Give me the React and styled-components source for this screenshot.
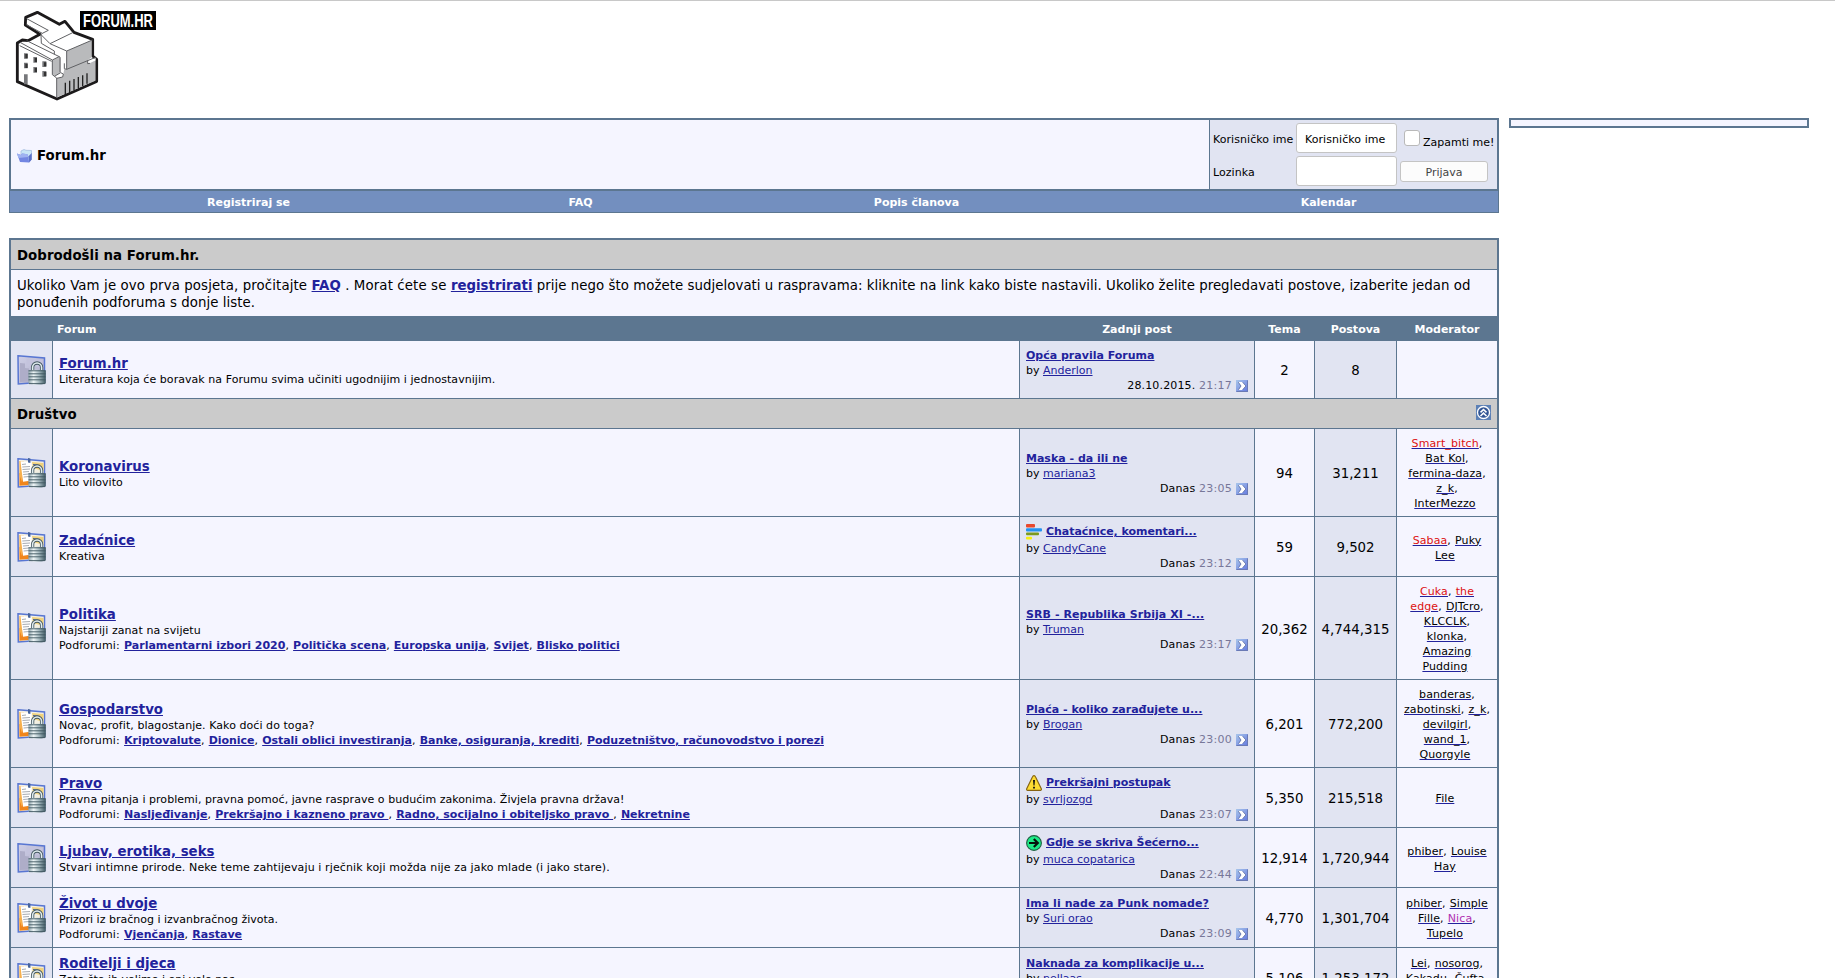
import React from "react";
import styled, { createGlobalStyle } from "styled-components";

const c = {
  line: "#5c7690",
  alt1: "#f5f5ff",
  alt2: "#e1e4f2",
  cat: "#cbcbcb",
  nav: "#738fbf",
  link: "#22229c",
};

const Global = createGlobalStyle`
  body { margin: 0; background: #fff; color: #000; overflow: hidden; }
  * { box-sizing: border-box; }
`;

const Page = styled.div`
  height: 978px;
  overflow: hidden;
  border-top: 1px solid #c8c8c8;
  padding: 9px 26px 0 9px;
  font: 13.333px/15px "DejaVu Sans", Verdana, sans-serif;
`;
const LogoRow = styled.header`
  height: 108px;
  padding-left: 7px;
  svg { display: block; overflow: visible; }
`;
const Columns = styled.div`
  display: flex;
  align-items: flex-start;
  gap: 10px;
`;
const Main = styled.main`
  width: 1490px;
  flex: none;
`;
const SideBox = styled.aside`
  width: 300px;
  height: 10px;
  border: 2px solid ${c.line};
  background: ${c.alt1};
`;
const TopBar = styled.div`
  display: flex;
  height: 73px;
  border: 2px solid ${c.line};
  background: ${c.alt1};
`;
const Crumb = styled.div`
  flex: 1;
  display: flex;
  align-items: center;
  gap: 5px;
  padding: 2px 0 0 6px;
  font-weight: bold;
`;
const Login = styled.form`
  width: 288px;
  border-left: 1px solid ${c.line};
  background: ${c.alt2};
  display: grid;
  grid-template-columns: 80px 101px 1fr;
  grid-template-rows: 30px 30px;
  gap: 3px;
  padding: 3px 0 0 3px;
  align-items: center;
  font-size: 11px;
  white-space: nowrap;
`;
const Label = styled.span`
  padding-top: 2px;
  letter-spacing: 0.06px;
`;
const Field = styled.input`
  width: 101px;
  height: 30px;
  border: 1px solid #c4c4c4;
  border-radius: 3px;
  background: #fff;
  color: #000;
  padding: 4px 7px 2px 8px;
  outline: none;
  letter-spacing: 0.06px;
  font: 11px "DejaVu Sans", sans-serif;
`;
const Remember = styled.label`
  display: flex;
  align-items: flex-start;
  gap: 3px;
  padding: 3px 0 0 4px;
  span { padding-top: 5px; }
`;
const Check = styled.input`
  appearance: none;
  flex: none;
  width: 16px;
  height: 16px;
  margin: 0;
  border: 1px solid #b9b9b9;
  border-radius: 3px;
  background: #fff;
`;
const Submit = styled.button`
  width: 88px;
  height: 21px;
  margin-top: 1px;
  padding: 1px 0 0;
  border: 1px solid #c4c4c4;
  border-radius: 3px;
  background: #fcfcfc;
  color: #444;
  font: 11px "DejaVu Sans", sans-serif;
`;
const Nav = styled.nav`
  display: grid;
  grid-template-columns: 477px 187px 485px 339px;
  height: 22px;
  border: 1px solid ${c.line};
  border-top: 0;
  background: ${c.nav};
  color: #fff;
  font-size: 11px;
  font-weight: bold;
  line-height: 24px;
  text-align: center;
  margin-bottom: 25px;
  span { height: 21px; }
`;
const Table = styled.section`
  display: grid;
  gap: 1px;
  border: 2px solid ${c.line};
  background: ${c.line};
`;
const Category = styled.div`
  display: flex;
  justify-content: space-between;
  align-items: center;
  height: 29px;
  padding: 1px 6px 0;
  background: ${c.cat};
  font-weight: bold;
  letter-spacing: 0.06px;
  svg { display: block; margin-top: -3px; }
`;
const Welcome = styled.div`
  height: 46px;
  padding: 7px 6px 0;
  background: ${c.alt1};
  line-height: 17px;
`;
const Tracked = styled.span`
  letter-spacing: ${(p) => p.$by}px;
`;
const Row = styled.div`
  display: grid;
  grid-template-columns: 41px 1fr 234px 59px 81px 100px;
  gap: 1px;
`;
const Head = styled(Row)`
  height: 23px;
  color: #fff;
  font-size: 11px;
  font-weight: bold;
  line-height: 25px;
  text-align: center;
  span { height: 23px; }
  span:nth-child(2) { text-align: left; padding-left: 4px; }
`;
const Cell = styled.div`
  display: flex;
  flex-direction: column;
  justify-content: center;
  align-items: ${(p) => (p.$center ? "center" : "stretch")};
  padding: ${(p) => (p.$icon ? "6px" : "7px 6px 5px")};
  background: ${(p) => (p.$alt ? c.alt2 : c.alt1)};
`;
const A = styled.a`
  color: ${c.link};
  text-decoration: underline;
  cursor: pointer;
  font-weight: ${(p) => (p.$bold ? "bold" : "inherit")};
  ${(p) => p.$bold && `letter-spacing: ${p.$track || 0}px; word-spacing: 0;`}
`;
const Title = styled.div`
  height: 17px;
  line-height: 17px;
`;
const Small = styled.div`
  font-size: 11px;
  line-height: 15px;
  white-space: pre-wrap;
  letter-spacing: ${(p) => p.$track || 0}px;
`;
const SubForums = styled(Small)`
  word-spacing: 0.7px;
`;
const SubLabel = styled.span`
  letter-spacing: 0.12px;
`;
const PostTitle = styled.div`
  display: flex;
  gap: 4px;
  height: ${(p) => (p.$icon ? 17 : 15)}px;
  svg { flex: none; display: block; }
`;
const Stamp = styled.div`
  display: flex;
  justify-content: flex-end;
  height: 15px;
  white-space: pre;
  letter-spacing: 0.15px;
  svg { display: block; margin: 2px 0 0 4px; }
`;
const Time = styled.span`
  color: #777799;
  letter-spacing: 0.25px;
`;
const Mods = styled.div`
  font-size: 11px;
  line-height: 15px;
  text-align: center;
  letter-spacing: 0.1px;
  word-spacing: 0.5px;
`;
const ModName = styled.span`
  color: ${(p) => p.$color || "#000"};
`;

const Logo = () => (
  <svg width="141" height="92" viewBox="48 30 423 276">
    <path d="M77 52 112 37 178 73 195 64 222 97 278 118 278 168 290 178 290 244 171 297 52 245 52 129 67 120 84 122 120 103 76 75Z" fill="#fff" stroke="#1c1a1b" strokeWidth="8.5" strokeLinejoin="round" />
    <path d="M200 153 275 121 275 172 263 181 263 190 286 180 286 242 171 292 171 235 188 231 193 207 200 208Z" fill="#b9babc" />
    <path d="M157 181 177 170 182 175 182 218 163 229 157 224Z" fill="#b9babc" />
    <path d="M263 181 287 174 287 181 266 191Z M164 229 182 220 190 223 188 231 170 234Z" fill="#fff" />
    <g fill="none" stroke="#606164" strokeWidth="3">
      <path d="M80 56 145 91 127 100 79 74 M127 100 123 104 124 130 163 153 163 163 M123 104 150 131 218 98 M150 131 200 153 277 120 M200 153V208L193 206V190M200 208 287 172M60 127 157 180 177 170 M80 122 180 171 V216 M157 180V224L170 234V292 M59 137 155 184 M165 228 182 218 190 222 188 231 170 235 M263 181 263 191 270 190" />
    </g>
    <path d="M72 160h11v16H72zM100 171h11v17h-11zM127 184h12v17h-12zM72 188h11v17H72zM100 201h11v17h-11zM127 213h12v17h-12zM72 223h11v30H72z" fill="#77787b" />
    <path d="M76 162h7v13h-7zM104 174h7v12h-7zM132 187h7v12h-7zM76 191h7v13h-7zM104 204h7v12h-7zM132 216h7v12h-7z" fill="#333" />
    <path d="M196 248V282M209 242V277M222 237V270M235 231V264M248 226V258M261 220V251" stroke="#222" strokeWidth="4" />
    <rect x="240" y="33" width="228" height="57" fill="#000" />
    <text x="249" y="81" fill="#fff" fontFamily="'Liberation Sans Narrow','Liberation Sans',sans-serif" fontWeight="bold" fontSize="57" textLength="210" lengthAdjust="spacingAndGlyphs">FORUM.HR</text>
  </svg>
);

const Folder = () => (
  <svg width="15" height="14" viewBox="0 0 15 14">
    <path d="M4 2 7 .5 9 1.3 14.5 1.5V10L12 13 4 9Z" fill="#c9e6f6" stroke="#9db8dd" strokeWidth=".7" />
    <path d="M0 4.5 4 6 5.2 4.5 10.5 5.3 12.3 13.5 3 13Z" fill="#7386e2" />
    <path d="M0 4.5 4 6 5.2 4.5 10.5 5.3 11.3 8 1.4 9Z" fill="#9fb2f1" />
    <path d="M12.3 13.5 14.7 10.5V4L11.3 7.5Z" fill="#5c70c8" />
  </svg>
);

const ForumIcon = ({ empty }) => (
  <svg width="29" height="30" viewBox="0 0 29 30">
    <defs>
      <linearGradient id="lock" x1="0" x2="1">
        <stop offset="0" stopColor="#8fa5ad" />
        <stop offset=".3" stopColor="#eef5f6" />
        <stop offset=".6" stopColor="#a8bcc2" />
        <stop offset="1" stopColor="#3c5660" />
      </linearGradient>
      <linearGradient id="pane" x1="0" x2="1" y2="1">
        <stop offset="0" stopColor="#cfcfe6" />
        <stop offset="1" stopColor="#aeadc9" />
      </linearGradient>
    </defs>
    <path d="M1 .8 27.5 3V27L1.3 29Z" fill={empty ? "url(#pane)" : "#f4f0e2"} stroke="#5876d2" strokeWidth="1.5" />
    {empty ? (
      <>
        <path d="M3 8 8 8.4V13L12 13.5V26.5L3 27Z" fill="#aeadc8" />
        <path d="M9.5 3.5 25.5 4.8V12L9.5 11Z" fill="#c4c3dd" />
      </>
    ) : (
      <>
        <path d="M2.4 15V27.7L14 26.8V17Z" fill="#f0861d" />
        <path d="M2.4 3V17L5 24 7 3.5Z" fill="#f6b04e" />
        <path d="M15 4 26.5 5V13L16 10Z" fill="#f0d27c" />
        <path d="M3.5 3.3 14.5 4V22.5L6 23.8Z" fill="#fff" />
        <path d="M5 6.5 9 6M5.3 9 13 8.5M5.5 11.5 13 11M6 14 12 13.5M6.2 16.5 12 16M6.6 19 12 18.5" stroke="#a8acb3" />
        <path d="M11 0 13.4 .4V5L11 4.4Z" fill="#46639c" />
        <path d="M16 6.4 23 7.4" stroke="#48649e" />
      </>
    )}
    <path d="M15.6 16V12.4a4.5 4.4 0 0 1 9 0V16" fill="none" stroke="#435761" strokeWidth="3.3" />
    <path d="M15.6 16V12.4a4.5 4.4 0 0 1 9 0V16" fill="none" stroke="#e2edef" strokeWidth="1.6" />
    <path d="M11.4 15.6Q20 13.9 28.8 15.6V28.4Q20 31 11.4 28.4Z" fill="url(#lock)" />
    <path d="M11.5 15.8H28.6M11.5 18.8H28.6M11.5 21.8H28.6M11.5 24.8H28.6M12 28.6H28" stroke="#3e5660" strokeWidth=".9" />
  </svg>
);

const GoIcon = () => (
  <svg width="12" height="12" viewBox="0 0 12 12">
    <defs>
      <linearGradient id="go" x1="0" x2="1" y2="1">
        <stop offset="0" stopColor="#a9c6ea" />
        <stop offset="1" stopColor="#6378e0" />
      </linearGradient>
    </defs>
    <rect width="12" height="12" fill="url(#go)" />
    <path d="M.5 11.5H11.5V.5" fill="none" stroke="#6a7ab4" />
    <path d="M2.5 2H6.2L9.8 6 6.2 10H2.5L5.2 6Z" fill="#fff" />
    <path d="M2.3 2.2 5 6 2.5 9.8M6.6 2.2 9.9 6 6.6 9.8" fill="none" stroke="#4a5889" strokeWidth=".6" />
  </svg>
);

const CollapseIcon = () => (
  <svg width="15" height="15" viewBox="0 0 15 15">
    <rect width="15" height="15" fill="#5c80b6" />
    <circle cx="7.5" cy="7.5" r="6" fill="#325594" stroke="#fff" strokeWidth="1.3" />
    <path d="M4.5 7.3 7.5 4.5 10.5 7.3M4.5 11 7.5 8.2 10.5 11" fill="none" stroke="#fff" strokeWidth="1.6" />
  </svg>
);

const PollIcon = () => (
  <svg width="16" height="16" viewBox="0 0 16 16">
    <rect x="0" y="0" width="9" height="3.4" rx="1" fill="#e9482d" />
    <rect x="0" y="4.3" width="16" height="3.2" rx="1" fill="#2492f0" />
    <rect x="0" y="8.5" width="13" height="2.8" rx="1" fill="#7a9a20" />
    <rect x="0" y="12.7" width="6" height="2.8" rx="1" fill="#f7ef0c" />
  </svg>
);
const WarnIcon = () => (
  <svg width="16" height="16" viewBox="0 0 16 16">
    <path d="M8 .6Q9 .6 9.6 2L15.4 14Q15.5 15.4 14.4 15.4H1.6Q.5 15.4.6 14L6.4 2Q7 .6 8 .6Z" fill="#fddb32" stroke="#856312" strokeWidth="1.1" />
    <path d="M7 5H9L8.5 10.6H7.5ZM7.1 11.7H8.9V13.5H7.1Z" fill="#111" />
  </svg>
);
const ArrowIcon = () => (
  <svg width="16" height="16" viewBox="0 0 16 16">
    <circle cx="8" cy="8" r="7.4" fill="#1dea87" stroke="#225e43" strokeWidth="1.1" />
    <path d="M3 8H11.5M7.8 4 11.8 8 7.8 12" fill="none" stroke="#06140d" strokeWidth="2.2" />
  </svg>
);
const postIcons = { poll: PollIcon, warn: WarnIcon, arrow: ArrowIcon };

const red = "#dd1111";
const general = {
  name: "Forum.hr", empty: true, track: 0.05, desc: "Literatura koja će boravak na Forumu svima učiniti ugodnijim i jednostavnijim.",
  post: "Opća pravila Foruma", by: "Anderlon", day: "28.10.2015.", time: "21:17", threads: "2", posts: "8", mods: [],
};
const forums = [
  { name: "Koronavirus", desc: "Lito vilovito", post: "Maska - da ili ne", by: "mariana3", time: "23:05", threads: "94", posts: "31,211", mods: [["Smart_bitch", red], ["Bat Kol"], ["fermina-daza"], ["z_k"], ["InterMezzo"]] },
  { name: "Zadaćnice", desc: "Kreativa", icon: "poll", post: "Chataćnice, komentari...", by: "CandyCane", time: "23:12", threads: "59", posts: "9,502", postTrack: -0.05, mods: [["Sabaa", red], ["Puky Lee"]] },
  { name: "Politika", track: 0.08, desc: "Najstariji zanat na svijetu", subs: ["Parlamentarni izbori 2020", "Politička scena", "Europska unija", "Svijet", "Blisko politici"], post: "SRB - Republika Srbija XI -...", postTrack: 0.07, by: "Truman", time: "23:17", threads: "20,362", posts: "4,744,315", mods: [["Cuka", red], ["the edge", red], ["DJTcro"], ["KLCCLK"], ["klonka"], ["Amazing Pudding"]] },
  { name: "Gospodarstvo", track: 0.06, subTrack: -0.035, desc: "Novac, profit, blagostanje. Kako doći do toga?", subs: ["Kriptovalute", "Dionice", "Ostali oblici investiranja", "Banke, osiguranja, krediti", "Poduzetništvo, računovodstvo i porezi"], post: "Plaća - koliko zarađujete u...", by: "Brogan", time: "23:00", threads: "6,201", posts: "772,200", mods: [["banderas"], ["zabotinski"], ["z_k"], ["devilgirl"], ["wand_1"], ["Quorgyle"]] },
  { name: "Pravo", track: 0.04, desc: "Pravna pitanja i problemi, pravna pomoć, javne rasprave o budućim zakonima. Živjela pravna država!", subs: ["Nasljeđivanje", "Prekršajno i kazneno pravo ", "Radno, socijalno i obiteljsko pravo ", "Nekretnine"], icon: "warn", post: "Prekršajni postupak", by: "svrljozgd", time: "23:07", threads: "5,350", posts: "215,518", mods: [["File"]] },
  { name: "Ljubav, erotika, seks", empty: true, track: 0.115, desc: "Stvari intimne prirode. Neke teme zahtijevaju i rječnik koji možda nije za jako mlade (i jako stare).", icon: "arrow", post: "Gdje se skriva Šećerno...", postTrack: -0.05, by: "muca copatarica", time: "22:44", threads: "12,914", posts: "1,720,944", mods: [["phiber"], ["Louise Hay"]] },
  { name: "Život u dvoje", desc: "Prizori iz bračnog i izvanbračnog života.", subs: ["Vjenčanja", "Rastave"], post: "Ima li nade za Punk nomade?", postTrack: 0.07, by: "Suri orao", time: "23:09", threads: "4,770", posts: "1,301,704", mods: [["phiber"], ["Simple Fille"], ["Nica", "#b030b0"], ["Tupelo"]] },
  { name: "Roditelji i djeca", desc: "Zato što ih volimo i oni vole nas.", subs: ["Trudnoća"], post: "Naknada za komplikacije u...", by: "nellaas", time: "23:10", threads: "5,106", posts: "1,253,172", mods: [["Lei"], ["nosorog"], ["Kakadu"], ["Čufta"], ["Tupelo"]] },
];

function ForumRow({ f }) {
  const PostIcon = postIcons[f.icon];
  return (
    <Row>
      <Cell $alt $center $icon><ForumIcon empty={f.empty} /></Cell>
      <Cell>
        <Title><A $bold>{f.name}</A></Title>
        <Small $track={f.track}>{f.desc}</Small>
        {f.subs && (
          <SubForums>
            <SubLabel>Podforumi: </SubLabel>
            {f.subs.map((s, i) => (
              <React.Fragment key={s}>{i > 0 && ", "}<A $bold $track={f.subTrack}>{s}</A></React.Fragment>
            ))}
          </SubForums>
        )}
      </Cell>
      <Cell $alt>
        <Small>
          <PostTitle $icon={f.icon}>{PostIcon && <PostIcon />}<A $bold $track={f.postTrack}>{f.post}</A></PostTitle>
          <div>by <A>{f.by}</A></div>
          <Stamp>{f.day || "Danas"} <Time>{f.time}</Time><GoIcon /></Stamp>
        </Small>
      </Cell>
      <Cell $center>{f.threads}</Cell>
      <Cell $alt $center>{f.posts}</Cell>
      <Cell>
        <Mods>
          {f.mods.map(([n, color], i) => (
            <React.Fragment key={n}>{i > 0 && ", "}<A><ModName $color={color}>{n}</ModName></A></React.Fragment>
          ))}
          {"\u00a0"}
        </Mods>
      </Cell>
    </Row>
  );
}

export default function App() {
  return (
    <Page>
      <Global />
      <LogoRow><Logo /></LogoRow>
      <Columns>
        <Main>
          <TopBar>
            <Crumb><Folder />Forum.hr</Crumb>
            <Login>
              <Label>Korisničko ime</Label>
              <Field defaultValue="Korisničko ime" />
              <Remember><Check type="checkbox" /><span>Zapamti me!</span></Remember>
              <Label>Lozinka</Label>
              <Field type="password" />
              <Submit type="button">Prijava</Submit>
            </Login>
          </TopBar>
          <Nav><span>Registriraj se</span><span>FAQ</span><span>Popis članova</span><span>Kalendar</span></Nav>
          <Table>
            <Category>Dobrodošli na Forum.hr.</Category>
            <Welcome>
              <Tracked $by={0.117}>Ukoliko Vam je ovo prva posjeta, pročitajte </Tracked><A $bold>FAQ</A><Tracked $by={0.12}> . Morat ćete se </Tracked><A $bold>registrirati</A><Tracked $by={0.04}> prije nego što možete sudjelovati u raspravama: kliknite na link kako biste nastavili. Ukoliko želite pregledavati postove, izaberite jedan od ponuđenih podforuma s donje liste.</Tracked>
            </Welcome>
            <Head><span /><span>Forum</span><span>Zadnji post</span><span>Tema</span><span>Postova</span><span>Moderator</span></Head>
            <ForumRow f={general} />
            <Category>Društvo<CollapseIcon /></Category>
            {forums.map((f) => <ForumRow key={f.name} f={f} />)}
          </Table>
        </Main>
        <SideBox />
      </Columns>
    </Page>
  );
}
